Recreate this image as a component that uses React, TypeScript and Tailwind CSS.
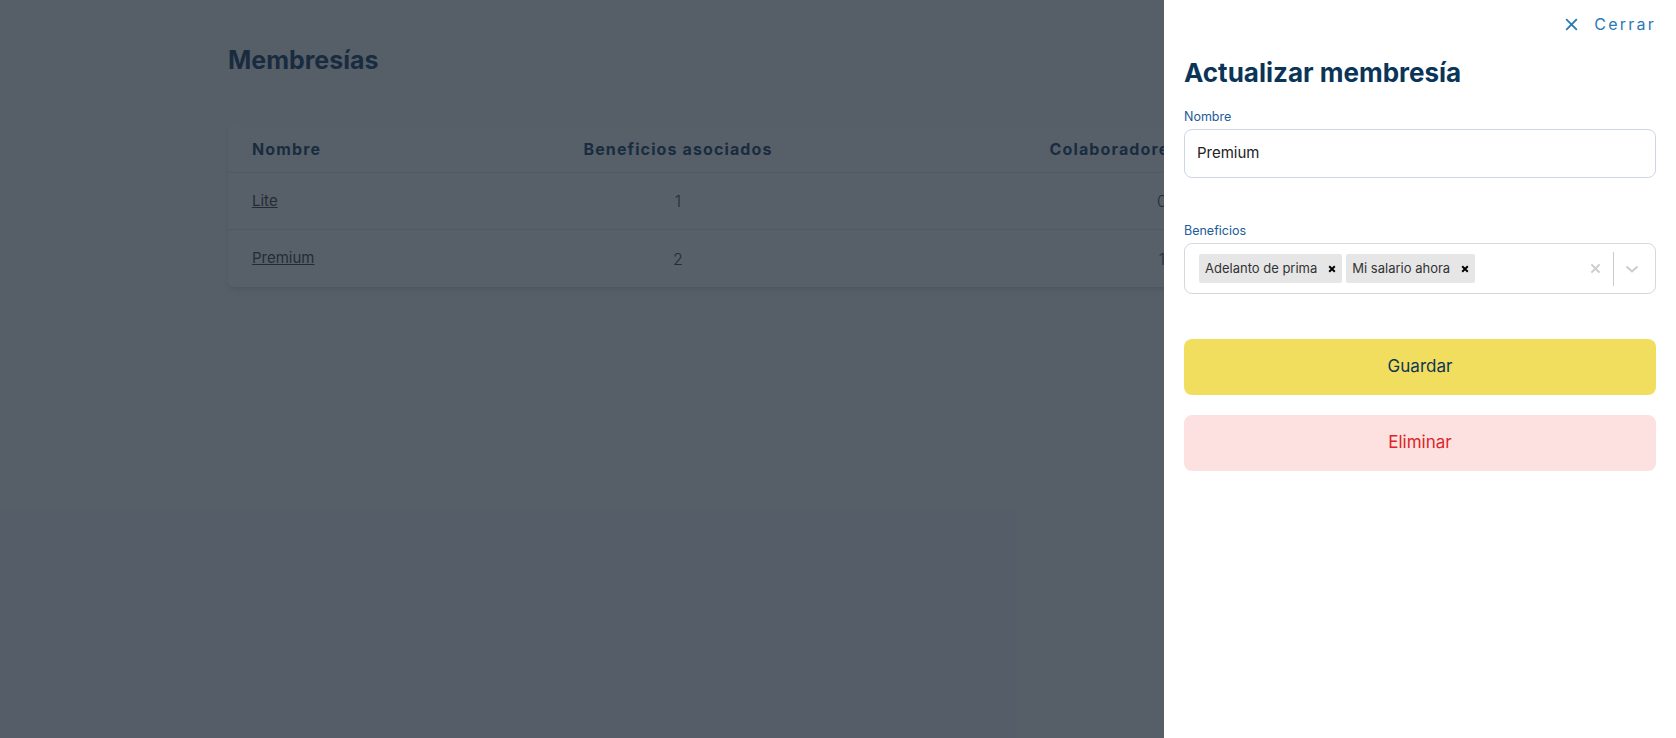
import React from 'react';

const font = { fontFamily: 'Inter, "Noto Sans", "Liberation Sans", sans-serif' };

const rows = [
    { name: 'Lite', benefits: 1, collaborators: 0 },
    { name: 'Premium', benefits: 2, collaborators: 1 },
];

const CloseIcon = ({ className }: { className?: string }) => (
    <svg viewBox="0 0 14 14" className={className} fill="none" stroke="currentColor" strokeWidth={2} strokeLinecap="square">
        <path d="M2 2L12 12M12 2L2 12" />
    </svg>
);

const Chip = ({ label }: { label: string }) => (
    <div className="flex h-[29px] items-center rounded-[2px] bg-[#e6e6e6]">
        <span className="pl-[6px] pr-[5px] text-[13px] text-[#333]">{label}</span>
        <span className="flex h-full w-[20px] items-center justify-center text-black">
            <svg viewBox="0 0 10 10" className="h-[8px] w-[8px]" fill="none" stroke="currentColor" strokeWidth={2.4}>
                <path d="M1.5 1.5L8.5 8.5M8.5 1.5L1.5 8.5" />
            </svg>
        </span>
    </div>
);

const MembershipTable: React.FC = () => (
    <div className="px-[228px] pt-[44px]">
        <h1 className="text-[25px] leading-[32px] font-bold text-[#0b3558]">Membresías</h1>
        <div className="mt-[50px] rounded-md bg-white shadow-md">
            <div className="grid h-[47px] grid-cols-[252px_396px_1fr] items-center border-b border-gray-200 text-[16px] font-bold tracking-[0.07em] text-[#0b3558]">
                <div className="pl-[24px]">Nombre</div>
                <div className="text-center">Beneficios asociados</div>
                <div className="text-center">Colaboradores asociados</div>
            </div>
            {rows.map((row, i) => (
                <div
                    key={row.name}
                    className={`grid h-[57px] grid-cols-[252px_396px_1fr] items-center text-[16px] text-[#333] ${i === 0 ? 'border-b border-gray-200' : ''}`}
                >
                    <div className="pl-[24px] text-[15px] underline">{row.name}</div>
                    <div className="text-center font-light">{row.benefits}</div>
                    <div className="text-center font-light">{row.collaborators}</div>
                </div>
            ))}
        </div>
    </div>
);

const UpdatePanel: React.FC = () => (
    <aside className="absolute top-0 right-0 flex h-full w-[512px] flex-col bg-white px-5">
        <div className="mt-[13px] flex h-[22px] items-center justify-end gap-[16px] text-[#2a78b4]">
            <CloseIcon className="h-[13px] w-[13px]" />
            <span className="text-[16px] tracking-[0.14em]">Cerrar</span>
        </div>

        <h2 className="mt-[22px] text-[26px] leading-[32px] font-bold text-[#0b3558]">Actualizar membresía</h2>

        <label className="mt-[19px] text-[12.5px] leading-[18px] text-[#215c98]">Nombre</label>
        <div className="mt-[3px] flex h-[49px] items-center rounded-lg border border-[#cdd6e2] px-[12px] text-[15px] text-[#222]">
            Premium
        </div>

        <label className="mt-[44px] text-[12.5px] leading-[18px] text-[#215c98]">Beneficios</label>
        <div className="mt-[3px] flex h-[51px] items-center rounded-lg border border-[#d3d8df] pl-[14px]">
            <div className="flex flex-1 items-center gap-[4px]">
                <Chip label="Adelanto de prima" />
                <Chip label="Mi salario ahora" />
            </div>
            <div className="mr-[5px] flex items-center text-[#cccccc]">
                <span className="flex w-[36px] items-center justify-center">
                    <svg viewBox="0 0 12 12" className="h-[11px] w-[11px]" fill="none" stroke="currentColor" strokeWidth={2.2}>
                        <path d="M1.5 1.5L10.5 10.5M10.5 1.5L1.5 10.5" />
                    </svg>
                </span>
                <span className="h-[34px] w-px bg-[#cccccc]" />
                <span className="flex w-[36px] items-center justify-center">
                    <svg viewBox="0 0 14 8" className="h-[8px] w-[14px]" fill="none" stroke="currentColor" strokeWidth={2}>
                        <path d="M1.5 1.5L7 6.5L12.5 1.5" />
                    </svg>
                </span>
            </div>
        </div>

        <button type="button" className="mt-[45px] h-[56px] rounded-lg bg-[#f2de5e] text-[17px] text-[#0d3659]">
            Guardar
        </button>
        <button type="button" className="mt-[20px] h-[56px] rounded-lg bg-[#fde1e1] text-[17px] text-[#dc2626]">
            Eliminar
        </button>
    </aside>
);

export default function App() {
    return (
        <div className="relative h-[738px] w-full overflow-hidden bg-gray-50" style={font}>
            <MembershipTable />
            <div className="absolute inset-0 bg-[#1f2937]/75" />
            <UpdatePanel />
        </div>
    );
}
